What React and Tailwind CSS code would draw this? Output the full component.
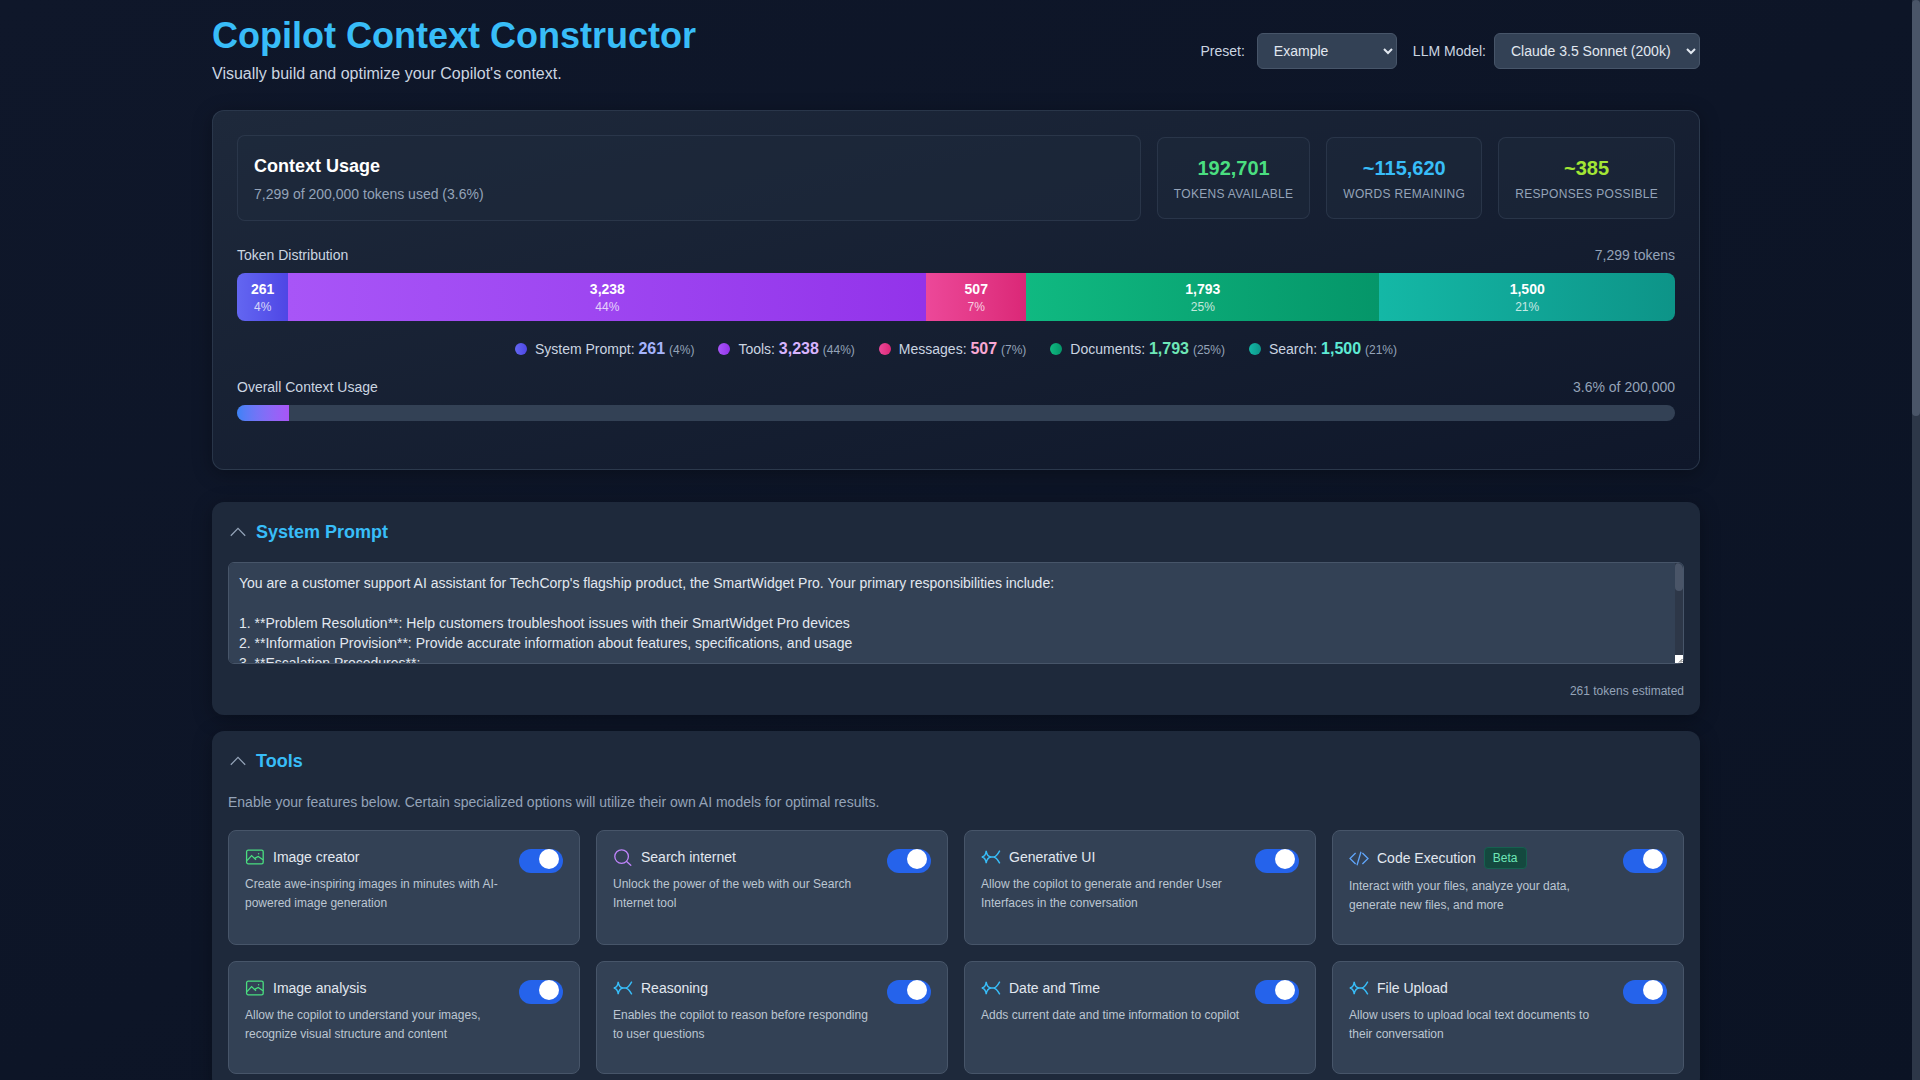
const segments = [
  { name: "System Prompt", tokens: 261, pct: "4%", bar: "bg-gradient-to-r from-[#6366f1] to-[#4f46e5]", value: "text-[#a5b4fc]" },
  { name: "Tools", tokens: 3238, pct: "44%", bar: "bg-gradient-to-r from-[#a855f7] to-[#9333ea]", value: "text-[#d8b4fe]" },
  { name: "Messages", tokens: 507, pct: "7%", bar: "bg-gradient-to-r from-[#ec4899] to-[#db2777]", value: "text-[#f9a8d4]" },
  { name: "Documents", tokens: 1793, pct: "25%", bar: "bg-gradient-to-r from-[#10b981] to-[#059669]", value: "text-[#6ee7b7]" },
  { name: "Search", tokens: 1500, pct: "21%", bar: "bg-gradient-to-r from-[#14b8a6] to-[#0d9488]", value: "text-[#5eead4]" },
];

const totalTokens = 7299;

const stats = [
  { value: "192,701", label: "Tokens Available", color: "text-[#4ade80]" },
  { value: "~115,620", label: "Words Remaining", color: "text-[#38bdf8]" },
  { value: "~385", label: "Responses Possible", color: "text-[#a3e635]" },
];

const tools = [
  { name: "Image creator", icon: "image", text: "Create awe-inspiring images in minutes with AI-powered image generation" },
  { name: "Search internet", icon: "search", text: "Unlock the power of the web with our Search Internet tool" },
  { name: "Generative UI", icon: "spark", text: "Allow the copilot to generate and render User Interfaces in the conversation" },
  { name: "Code Execution", icon: "code", beta: true, text: "Interact with your files, analyze your data, generate new files, and more" },
  { name: "Image analysis", icon: "image", text: "Allow the copilot to understand your images, recognize visual structure and content" },
  { name: "Reasoning", icon: "spark", text: "Enables the copilot to reason before responding to user questions" },
  { name: "Date and Time", icon: "spark", text: "Adds current date and time information to copilot" },
  { name: "File Upload", icon: "spark", text: "Allow users to upload local text documents to their conversation" },
];

const prompt = `You are a customer support AI assistant for TechCorp's flagship product, the SmartWidget Pro. Your primary responsibilities include:

1. **Problem Resolution**: Help customers troubleshoot issues with their SmartWidget Pro devices
2. **Information Provision**: Provide accurate information about features, specifications, and usage
3. **Escalation Procedures**:
   - Identify issues that require a human agent
   - Collect the device serial number before escalating
4. **Tone and Style**:
   - Be friendly, patient and professional
   - Keep answers short and easy to follow
5. **Limitations**:
   - Do not promise refunds or replacements
   - Do not share internal documentation

Always confirm that the issue is resolved before ending the conversation.`;

function ToolIcon({ type }) {
  if (type === "image") {
    return (
      <svg viewBox="0 0 20 20" fill="none" stroke="#4ade80" strokeWidth="1.3" className="w-5 h-5 shrink-0">
        <rect x="1.6" y="3.2" width="16.6" height="13.6" rx="1.6" />
        <path d="M2 13.6 L6.6 8.6 L11 12.8 M9.6 11.4 L13.2 9.4 L18 12.8" />
        <circle cx="13.6" cy="6.8" r="0.7" fill="#4ade80" stroke="none" />
      </svg>
    );
  }
  if (type === "search") {
    return (
      <svg viewBox="0 0 20 20" fill="none" stroke="#c084fc" strokeWidth="1.3" className="w-5 h-5 shrink-0">
        <circle cx="8.6" cy="9.6" r="6.8" />
        <path d="M13.6 14.4 L17.8 18.2" strokeLinecap="round" />
      </svg>
    );
  }
  if (type === "code") {
    return (
      <svg viewBox="0 0 20 20" fill="none" stroke="#60a5fa" strokeWidth="1.3" className="w-5 h-5 shrink-0">
        <path d="M6.6 5 L1 10.5 L6.6 16 M13.4 5 L19 10.5 L13.4 16 M12 3.8 L8 17.2" />
      </svg>
    );
  }
  return (
    <svg viewBox="0 0 20 20" fill="none" stroke="#38bdf8" strokeWidth="1.4" className="w-5 h-5 shrink-0">
      <path d="M0.8 10 C3.6 9.5 4.8 7.5 5.2 3.8 C5.7 7.5 7 9.5 10 10 C7 10.5 5.7 12.5 5.2 16.2 C4.8 12.5 3.6 10.5 0.8 10 Z" />
      <path d="M10 10 H12.6 C15 10 16.6 7.6 18.8 3.6 M12.6 10 C15 10 16.6 12.4 18.8 16.4" />
    </svg>
  );
}

function SectionHeader({ title }) {
  return (
    <div className="flex items-center gap-2 mb-4">
      <svg viewBox="0 0 20 20" fill="none" stroke="#94a3b8" strokeWidth="1.25" className="w-5 h-5">
        <path d="M2.8 13.8 L10 6.3 L17.2 13.8" />
      </svg>
      <h2 className="text-lg font-semibold text-[#38bdf8]">{title}</h2>
    </div>
  );
}

function Toggle() {
  return (
    <div className="relative w-11 h-6 mt-0.5 shrink-0 rounded-full bg-[#2563eb]">
      <div className="absolute top-0 right-1 w-5 h-5 rounded-full bg-white"></div>
    </div>
  );
}

function ToolCard({ tool }) {
  return (
    <div className="flex items-start justify-between gap-3 bg-[#334155] border border-[#475569] rounded-lg pt-4 px-4 pb-[29px]">
      <div className="flex-1 min-w-0">
        <div className="flex items-center gap-2">
          <ToolIcon type={tool.icon} />
          <span className="text-sm text-[#e2e8f0]">{tool.name}</span>
          {tool.beta && (
            <span className="px-2 py-0.5 text-xs rounded border border-[#166050] bg-[#14493f] text-[#6ee7b7]">Beta</span>
          )}
        </div>
        <p className="mt-2 text-xs leading-[19px] text-[#bcc6d2]">{tool.text}</p>
      </div>
      <Toggle />
    </div>
  );
}

export default function App() {
  return (
    <div className="flex h-screen bg-gradient-to-br from-[#0f172a] to-[#0b1324] font-['Liberation_Sans',sans-serif]">
      <div className="flex-1 min-w-0 overflow-y-auto">
        <div className="max-w-[1536px] min-h-[2800px] mx-auto px-6 pt-4">
          {/* header */}
          <div className="flex items-center justify-between mb-6">
            <div>
              <h1 className="text-4xl font-bold text-[#38bdf8]">Copilot Context Constructor</h1>
              <p className="mt-1.5 text-base text-[#cbd5e1]">Visually build and optimize your Copilot's context.</p>
            </div>
            <div className="flex items-center gap-4 text-sm text-[#cbd5e1]">
              <div className="flex items-center">
                <label className="mr-3">Preset:</label>
                <select defaultValue="Example" className="w-[140px] h-9 px-3 rounded-md bg-[#334155] border border-[#475569] text-[#e2e8f0]">
                  <option>Example</option>
                </select>
              </div>
              <div className="flex items-center">
                <label className="mr-2">LLM Model:</label>
                <select defaultValue="Claude 3.5 Sonnet (200k)" className="w-[206px] h-9 px-3 rounded-md bg-[#334155] border border-[#475569] text-[#e2e8f0]">
                  <option>Claude 3.5 Sonnet (200k)</option>
                </select>
              </div>
            </div>
          </div>

          {/* context usage */}
          <div className="p-6 mb-8 rounded-xl border border-[#334155]/70 bg-gradient-to-br from-[#1e293b] to-[#0f172a] shadow-[0_4px_20px_rgba(0,0,0,0.3)]">
            <div className="flex items-center gap-4 mb-6">
              <div className="flex-1 p-4 rounded-lg border border-[#334155]/60 bg-[#1e293b]/50">
                <h2 className="text-lg font-semibold text-white">Context Usage</h2>
                <p className="mt-1 text-sm text-[#94a3b8]">7,299 of 200,000 tokens used (3.6%)</p>
              </div>
              {stats.map((s) => (
                <div key={s.label} className="p-4 text-center rounded-lg border border-[#334155]/60 bg-[#1e293b]/50">
                  <div className={`text-xl font-bold ${s.color}`}>{s.value}</div>
                  <div className="mt-1 text-xs uppercase tracking-wide text-[#94a3b8]">{s.label}</div>
                </div>
              ))}
            </div>

            <div className="flex justify-between mb-2 text-sm">
              <span className="text-[#cbd5e1]">Token Distribution</span>
              <span className="text-[#94a3b8]">7,299 tokens</span>
            </div>
            <div className="flex h-12 rounded-lg overflow-hidden">
              {segments.map((s) => (
                <div key={s.name} className={`flex flex-col items-center justify-center text-white ${s.bar}`} style={{ width: `${(s.tokens / totalTokens) * 100}%` }}>
                  <span className="text-sm font-bold">{s.tokens.toLocaleString("en-US")}</span>
                  <span className="text-xs opacity-75">{s.pct}</span>
                </div>
              ))}
            </div>

            <div className="flex justify-center gap-6 mt-4">
              {segments.map((s) => (
                <div key={s.name} className="flex items-center gap-2">
                  <span className={`w-3 h-3 rounded-full ${s.bar}`}></span>
                  <span className="text-sm text-[#cbd5e1]">
                    {s.name}: <span className={`text-base font-semibold ${s.value}`}>{s.tokens.toLocaleString("en-US")}</span> <span className="text-xs text-[#94a3b8]">({s.pct})</span>
                  </span>
                </div>
              ))}
            </div>

            <div className="flex justify-between mt-4 mb-2 text-sm">
              <span className="text-[#cbd5e1]">Overall Context Usage</span>
              <span className="text-[#94a3b8]">3.6% of 200,000</span>
            </div>
            <div className="h-4 mb-6 rounded-lg overflow-hidden bg-[#334155]">
              <div className="h-full bg-gradient-to-r from-[#3b82f6] to-[#a855f7]" style={{ width: "3.6%" }}></div>
            </div>
          </div>

          {/* system prompt */}
          <div className="p-4 mb-4 rounded-xl bg-[#1e293b] shadow-[0_4px_20px_rgba(0,0,0,0.3)]">
            <SectionHeader title="System Prompt" />
            <div className="relative">
              <textarea
                rows={4}
                defaultValue={prompt}
                className="block w-full p-2.5 text-sm rounded-md bg-[#334155] border border-[#475569] text-[#e2e8f0]"
              />
              {/* textarea scrollbar and resize corner */}
              <div className="absolute top-px right-px bottom-px w-2 flex flex-col rounded-tr-md overflow-hidden bg-[#2d3748]">
                <div className="h-7 rounded bg-[#4a5568]"></div>
                <div className="flex-1"></div>
                <svg viewBox="0 0 8 8" className="w-2 h-2 bg-white" stroke="#555" strokeWidth="1">
                  <path d="M7.5 4 L4 7.5 M7.5 6 L6 7.5" />
                </svg>
              </div>
            </div>
            <p className="mt-[19px] text-xs text-right text-[#94a3b8]">261 tokens estimated</p>
          </div>

          {/* tools */}
          <div className="p-4 rounded-xl bg-[#1e293b] shadow-[0_4px_20px_rgba(0,0,0,0.3)]">
            <SectionHeader title="Tools" />
            <p className="pt-px mb-[18px] text-sm text-[#94a3b8]">Enable your features below. Certain specialized options will utilize their own AI models for optimal results.</p>
            <div className="grid grid-cols-4 gap-4">
              {tools.map((t) => (
                <ToolCard key={t.name} tool={t} />
              ))}
            </div>
          </div>
        </div>
      </div>

      {/* page scrollbar */}
      <div className="w-2 shrink-0 bg-[#2d3748]">
        <div className="h-[416px] rounded bg-[#4a5568]"></div>
      </div>
    </div>
  );
}
